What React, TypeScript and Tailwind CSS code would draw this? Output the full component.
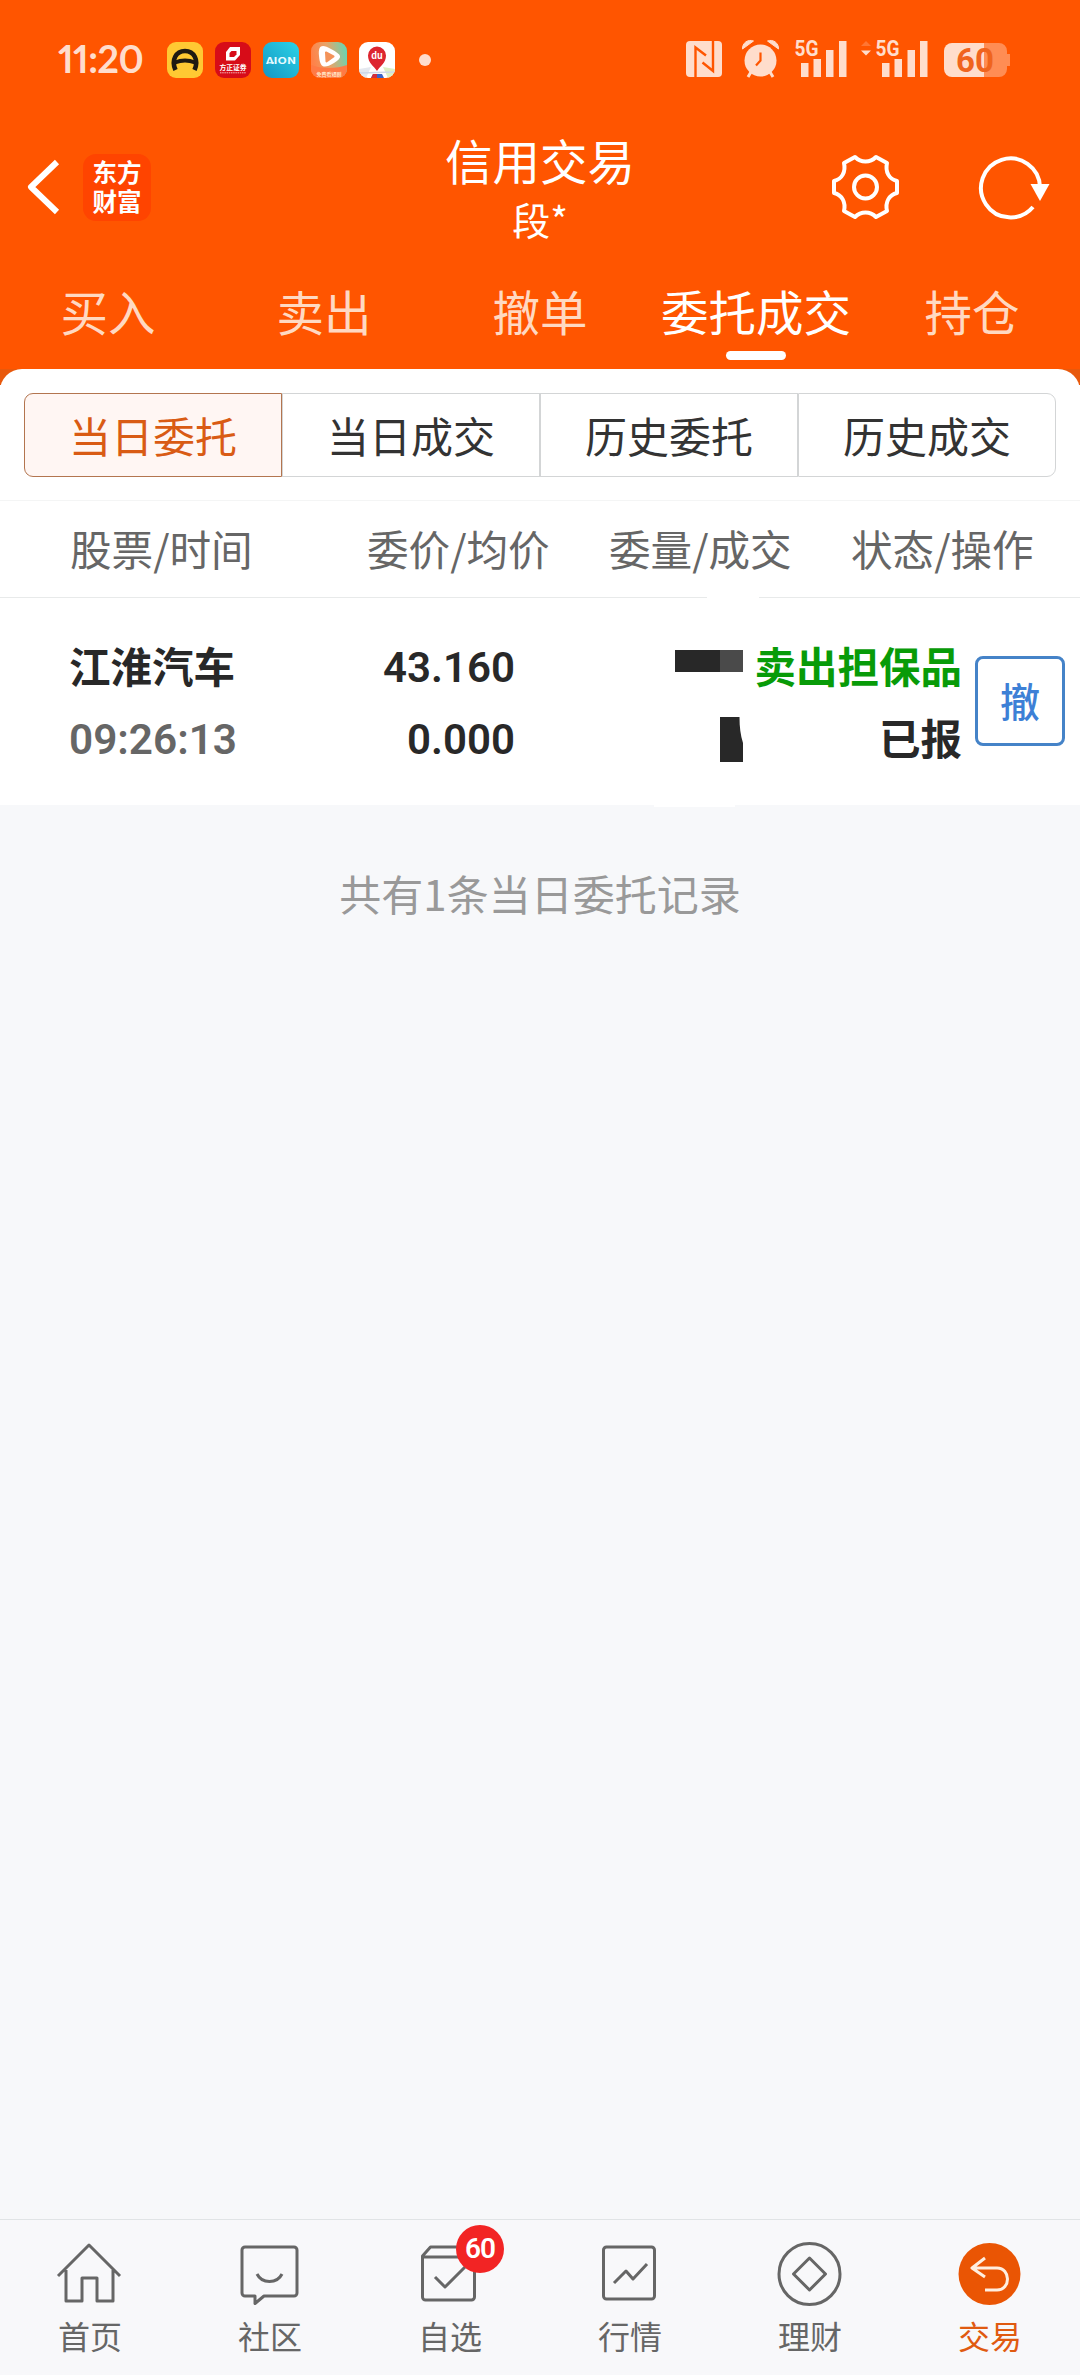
import type { ReactNode } from 'react';

type TabProps = {
  label: string;
  active?: boolean;
};

type NavItemProps = {
  label: string;
  icon: ReactNode;
  active?: boolean;
  badge?: string;
};

const tabs = ['买入', '卖出', '撤单', '委托成交', '持仓'];
const segments = ['当日委托', '当日成交', '历史委托', '历史成交'];

function AppIcons() {
  return (
    <svg className="h-9 w-[276px]" viewBox="0 0 276 36">
      <defs>
        <linearGradient id="aion" x1="0" y1="1" x2="1" y2="0">
          <stop offset="0" stopColor="#1596c4" />
          <stop offset="1" stopColor="#2bd3e6" />
        </linearGradient>
        <linearGradient id="video" x1="0" y1="0.3" x2="1" y2="0.1">
          <stop offset="0" stopColor="#ff8148" />
          <stop offset="0.45" stopColor="#e8a468" />
          <stop offset="1" stopColor="#5fd8b8" />
        </linearGradient>
        <clipPath id="mapClip">
          <rect x="192" width="36" height="36" rx="9" />
        </clipPath>
        <clipPath id="videoClip">
          <rect x="144" width="36" height="36" rx="9" />
        </clipPath>
      </defs>

      {/* Autohome */}
      <rect width="36" height="36" rx="9" fill="#ffc933" />
      <path d="M8.500 28C4 18 9 9 18 9s14 9 9.500 19" fill="none" stroke="#1f1a12" strokeWidth="4.600" />
      <path d="M8 20.500c6-2.500 14-2.500 20 0" fill="none" stroke="#1f1a12" strokeWidth="4" />

      {/* Founder Securities */}
      <rect x="48" width="36" height="36" rx="9" fill="#d70c18" />
      <path d="M63 5h10v8l-5 5.500h-9V10z" fill="#fff" />
      <path d="M64.500 9h5v3.500L67 15h-4.500v-4z" fill="#d70c18" />
      <text x="66" y="28" textAnchor="middle" fontSize="6.800" fontWeight="700" fill="#fff">方正证券</text>
      <path d="M53 30.800h26" stroke="#fff" strokeWidth="1" strokeDasharray="1.500 0.700" opacity="0.7" />

      {/* Aion */}
      <rect x="96" width="36" height="36" rx="9" fill="url(#aion)" />
      <text x="114" y="21.500" textAnchor="middle" textLength="30" lengthAdjust="spacingAndGlyphs" fontSize="9" fontWeight="700" fill="#e9fbff">ΛION</text>
      <path d="M100 20.800h7" stroke="#e9fbff" strokeWidth="1.200" />

      {/* Video */}
      <g clipPath="url(#videoClip)">
        <rect x="144" width="36" height="36" fill="url(#video)" />
        <path d="M144 23c10 4 26 4 36 0v13h-36z" fill="#ff7a45" />
        <path d="M152 14c-1-11 3-12 12-7 11 6 12 8 3 14-10 6-14 5-15-7z" fill="#fff" />
        <path d="M159 10.500l7.500 4-7 5z" fill="#f3935a" stroke="#f3935a" strokeWidth="2" strokeLinejoin="round" />
        <text x="162" y="33.500" textAnchor="middle" fontSize="5" fontWeight="700" fill="#ffe3c4">免费看短剧</text>
      </g>

      {/* Map */}
      <g clipPath="url(#mapClip)">
        <rect x="192" width="36" height="36" fill="#fff" />
        <path d="M192 27l12-2-5 11h-7z" fill="#e4e8ef" />
        <path d="M216 25l12 2v9h-7z" fill="#dcefc4" />
        <path d="M192 31l36-1" stroke="#cdd8e8" strokeWidth="1.500" />
        <path d="M206 32h9l2 4h-13z" fill="#3a63c8" />
        <path d="M206 32h4v4h-6z" fill="#d5303a" />
        <path d="M210 29c-3-5-9-8-9-15.500a9 9 0 0 1 18 0c0 7.500-6 10.500-9 15.500z" fill="#dd2630" />
        <text x="210" y="17" textAnchor="middle" fontSize="9" fontWeight="700" fill="#fff">du</text>
      </g>

      <circle cx="258" cy="18" r="6" fill="#ffddcc" />
    </svg>
  );
}

function StatusIcons() {
  return (
    <svg className="-mt-3 h-[60px] w-[326px] font-['Roboto',sans-serif]" viewBox="686 28 326 60" fill="#ffddcc">
      <rect x="686" y="41" width="36" height="36" rx="4" />
      <path d="M695.500 77V47.500L706 55.500M713 41v30l-10.500-8.500" fill="none" stroke="#ff5500" strokeWidth="2.400" />

      <circle cx="760.500" cy="60.500" r="16" />
      <path d="M742.500 49a8 8 0 0 1 11-8zM778.500 49a8 8 0 0 0-11-8z" stroke="#ffddcc" strokeLinejoin="round" />
      <path d="M751 72l-3 5M770 72l3 5" stroke="#ffddcc" strokeWidth="3" />
      <path d="M760.500 52.500v8l-4.500 5" fill="none" stroke="#ff5500" strokeWidth="2.200" />

      <text x="794.500" y="56" fontSize="22" fontWeight="700" textLength="24" lengthAdjust="spacingAndGlyphs">5G</text>
      <path d="M801 63h7.500v14H801zM813.500 59h7.500v18h-7.500zM826 50h7.500v27H826zM839 41h7.500v36H839z" />

      <path d="M861 46l5-5 5 5z" opacity="0.25" />
      <path d="M861 50.500h10l-5 5z" />
      <text x="875.500" y="56" fontSize="22" fontWeight="700" textLength="24" lengthAdjust="spacingAndGlyphs">5G</text>
      <path d="M882 63h7.500v14H882zM894.500 59h7.500v18h-7.500zM907.500 50h7.500v27h-7.500zM920 41h7.500v36H920z" />

      <path d="M984 43h15a8 8 0 0 1 8 8v3h3v12h-3v3a8 8 0 0 1-8 8h-15z" fill="#ff8d54" />
      <path d="M984 43h-32a8 8 0 0 0-8 8v18a8 8 0 0 0 8 8h32z" />
      <text x="975" y="71.500" textAnchor="middle" fontSize="33" fontWeight="700" fill="#f0641e">60</text>
    </svg>
  );
}

function Tab({ label, active }: TabProps) {
  return (
    <div className="flex w-[216px] flex-col items-center">
      <span className={active ? 'text-white' : 'text-[#ffd9c2]'}>{label}</span>
      {active && <span className="mt-1 h-[9px] w-[60px] rounded-full bg-white" />}
    </div>
  );
}

function NavItem({ label, icon, active, badge }: NavItemProps) {
  return (
    <div className={`relative flex w-[180px] flex-col items-center pt-[17px] ${active ? 'text-[#e05a10]' : 'text-[#666]'}`}>
      <svg className="mr-[2px] h-[70px] w-[70px]" viewBox="0 0 70 70" fill="none" stroke="currentColor" strokeWidth="3" strokeLinejoin="round">
        {icon}
      </svg>
      <span className="mt-1 text-[32px] leading-[48px]">{label}</span>
      {badge && (
        <span className="absolute top-[5px] left-24 flex h-12 w-12 items-center justify-center rounded-full bg-[#f22424] font-['Roboto',sans-serif] text-[28px] font-semibold tracking-[-1px] text-white">
          {badge}
        </span>
      )}
    </div>
  );
}

export default function App() {
  return (
    <div className="flex h-[2375px] w-[1080px] flex-col overflow-hidden bg-[#f7f8fa] font-['Noto_Sans_CJK_SC',sans-serif]">
      <header className="h-[369px] bg-[#ff5500] text-white">
        <div className="flex h-[120px] items-start pt-10 pl-[58px]">
          <span className="w-[109px] font-['Lato',sans-serif] text-[38px] leading-[37px] font-bold tracking-[-0.600px] text-[#ffddcc] proportional-nums">11:20</span>
          <div className="pt-[2px]">
            <AppIcons />
          </div>
          <div className="ml-[243px]">
            <StatusIcons />
          </div>
        </div>

        <div className="flex h-[134px] pl-[25px]">
          <svg className="mt-[39px] h-14 w-9" viewBox="0 0 36 56" fill="none" stroke="#fff" strokeWidth="6" strokeLinejoin="round">
            <path d="M32 3L6 28l26 25" />
          </svg>
          <div className="mt-[34px] ml-[22px] flex h-[67px] w-[68px] flex-col items-center justify-center rounded-[13px] bg-[#ff4400] pb-1 text-[24.500px] leading-[29px] font-bold">
            <span>东方</span>
            <span>财富</span>
          </div>
          <div className="ml-[239px] flex w-[300px] flex-col items-center pt-[5px]">
            <h1 className="text-[47.500px] leading-[70px]">信用交易</h1>
            <p className="-mt-px text-[38px] leading-[50px]">段*</p>
          </div>
          <svg className="mt-[32px] ml-[140px] h-[70px] w-[230px]" viewBox="830 152 230 70" fill="none" stroke="#fff" strokeWidth="4" strokeLinejoin="round">
            <path d="M855 157c6 6 15 6 21 0l11 6c-2 9 2 16 10 18v12c-8 2-12 9-10 18l-11 6c-6-6-15-6-21 0l-11-6c2-9-2-16-10-18v-12c8-2 12-9 10-18z" />
            <circle cx="865.500" cy="187" r="11.500" />
            <path d="M1040 187a29.500 29.500 0 1 0-7 20" />
            <path d="M1030.500 184h19l-9.500 17z" fill="#fff" stroke="none" />
          </svg>
        </div>

        <nav className="flex pt-[21px] text-[47.500px] leading-[72px]">
          {tabs.map((label) => (
            <Tab key={label} label={label} active={label === '委托成交'} />
          ))}
        </nav>
      </header>

      <div className="bg-linear-to-b from-[#e8590c] from-[16px] to-white to-[16px]">
        <section className="h-[436px] rounded-t-[22px] bg-white">
          <div className="flex px-6 pt-6">
            {segments.map((label, i) => (
              <div
                key={label}
                className={`flex h-[84px] w-[258px] items-center justify-center border pb-[2px] text-[42px] ${
                  i === 0
                    ? 'rounded-l-[9px] border-[#b3754f] bg-[#fff6f3] text-[#d95b14]'
                    : 'border-[#d3d5d6] text-[#333] last:rounded-r-[9px]'
                }`}
              >
                {label}
              </div>
            ))}
          </div>

          <div className="relative mt-[23px] flex h-[98px] items-center border-y border-t-[#f4f5f5] border-b-[#e8eaea] pb-px pl-[70px] text-[41.600px] text-[#666]">
            <span className="w-[297px]">股票/时间</span>
            <span className="w-[242px]">委价/均价</span>
            <span className="w-[242px]">委量/成交</span>
            <span>状态/操作</span>
            <span className="absolute -bottom-px left-[707px] h-px w-[52px] bg-white" />
          </div>

          <div className="flex pt-[31px] pl-[69px] text-[41.500px] leading-[72px] font-bold text-[#282828]">
            <div className="w-[205px]">
              <p>江淮汽车</p>
              <p className="font-['Roboto',sans-serif] text-[42.300px] leading-[78px] font-semibold text-[#666]">09:26:13</p>
            </div>
            <div className="w-[241px] pt-[3px] text-right font-['Roboto',sans-serif] text-[42px] font-semibold">
              <p>43.160</p>
              <p>0.000</p>
            </div>
            {/* masked quantities */}
            <svg className="mt-[21px] ml-[160px] h-[112px] w-[68px]" viewBox="0 0 68 112">
              <path d="M0 0h45v22H0zM45 67h19.500c0 10 1 18 3.500 26v19H45z" fill="#282828" />
              <path d="M45 0h23v22H45z" fill="#4a4a4a" />
            </svg>
            <div className="ml-[8px] w-[211px] text-right text-[41.500px]">
              <p className="text-[#089b08]">卖出担保品</p>
              <p>已报</p>
            </div>
            <button className="mt-[27px] ml-[13px] flex h-[90px] w-[90px] items-center justify-center rounded-lg border-3 border-[#4583c8] pb-[2px] text-[40px] font-medium text-[#3d80d6]">
              撤
            </button>
          </div>
        </section>
      </div>

      <main className="flex-1">
        <div className="ml-[654px] h-[2px] w-[81px] bg-white" />
        <p className="pt-[54px] text-center text-[42px] leading-[64px] text-[#999]">共有1条当日委托记录</p>
      </main>

      <footer className="flex h-[156px] border-t border-[#e1e4e6] bg-[#f8f8fa]">
        <NavItem
          label="首页"
          icon={<path d="M4 39L35 8l31 31M12 33v31h16V41h15v23h16V33" />}
        />
        <NavItem
          label="社区"
          icon={
            <>
              <path d="M11 10h49a3 3 0 0 1 3 3v43a3 3 0 0 1-3 3H30l-9 7.500V59H11a3 3 0 0 1-3-3V13a3 3 0 0 1 3-3z" />
              <path d="M23 37c5 10 20 10 25 0" />
            </>
          }
        />
        <NavItem
          label="自选"
          badge="60"
          icon={
            <>
              <path d="M8.500 19v41a3 3 0 0 0 3 3h46a3 3 0 0 0 3-3V19l-8-9h-36zM9 20h52" />
              <path d="M21 40l10 10 20-20" />
            </>
          }
        />
        <NavItem
          label="行情"
          icon={
            <>
              <rect x="9.500" y="10" width="51" height="52" rx="3" />
              <path d="M20 46l12-12 7 8 14-15" />
            </>
          }
        />
        <NavItem
          label="理财"
          icon={
            <>
              <circle cx="35.500" cy="37" r="30.500" />
              <path d="M35.500 21l16 16-16 16-16-16z" />
            </>
          }
        />
        <NavItem
          label="交易"
          active
          icon={
            <>
              <circle cx="35.500" cy="37" r="31" fill="#ea5504" stroke="none" />
              <path d="M31 21L18 31l13 9M18 31h25c14 0 14 22 0 22H31" stroke="#ffeee0" />
            </>
          }
        />
      </footer>
    </div>
  );
}
